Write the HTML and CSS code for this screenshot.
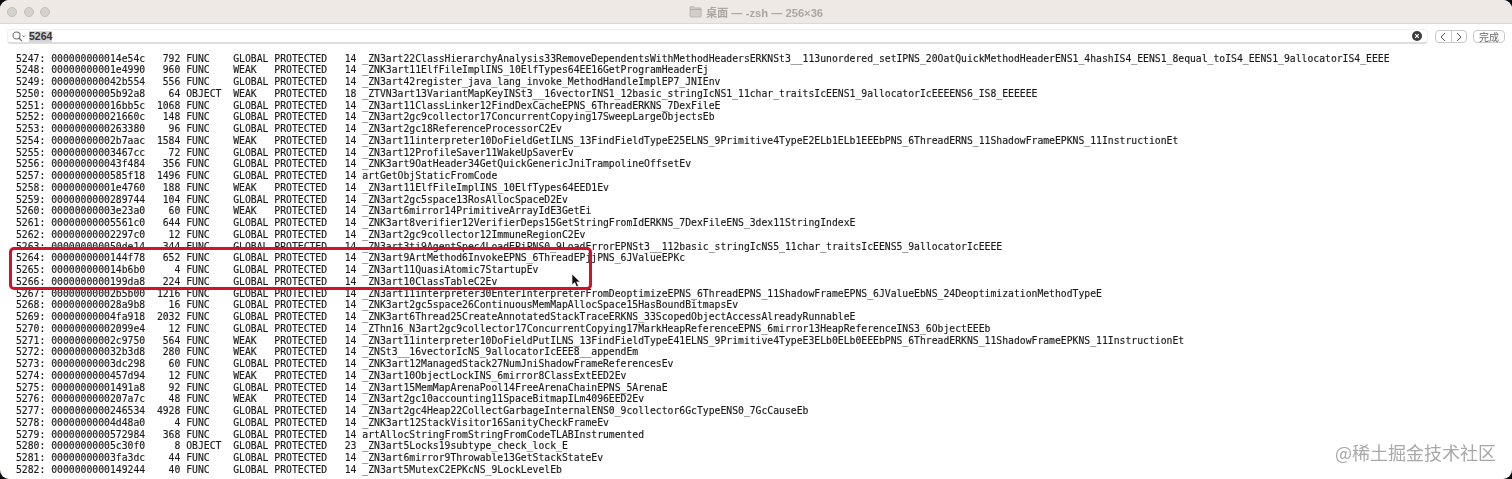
FILE: index.html
```html
<!DOCTYPE html>
<html lang="zh">
<head>
<meta charset="utf-8">
<title>桌面 — -zsh — 256×36</title>
<link rel="stylesheet" href="styles.css">
</head>
<body>
<div class="window">
  <header class="titlebar">
    <div class="lights"><span class="light"></span><span class="light"></span><span class="light"></span></div>
    <div class="title">
      <svg class="folder" width="13" height="12" viewBox="0 0 13 12"><path d="M1 3V1.500C1 1 1.300.7 1.800.7h3l1 1.200h5.400c.6 0 1 .4 1 1V10c0 .7-.4 1-1 1H1.800C1.300 11 1 10.700 1 10z" fill="#d2cdc8" stroke="#b0aba6" stroke-width=".7"/><path d="M1 3.500h11" stroke="#a5a09b" stroke-width=".7"/></svg>
      <span>桌面 — -zsh — 256×36</span>
    </div>
  </header>
  <div class="findbar">
    <div class="field">
      <svg class="glass" width="14" height="11" viewBox="0 0 14 11"><circle cx="4.500" cy="4.500" r="3.500" fill="none" stroke="#6f6f6f" stroke-width="1.100"/><path d="M7 7l2.800 3" stroke="#6f6f6f" stroke-width="1.200"/><path d="M10.500 4.500l1.300 1.300 1.300-1.300" fill="none" stroke="#6f6f6f"/></svg>
      <span class="query">5264</span>
      <svg class="clear" width="10" height="10" viewBox="0 0 10 10"><circle cx="5" cy="5" r="5" fill="#3c3c3c"/><path d="M3.200 3.200l3.600 3.600M6.800 3.200l-3.600 3.600" stroke="#fff" stroke-width="1.200"/></svg>
    </div>
    <div class="stepper">
      <span class="step"><svg width="6" height="10" viewBox="0 0 6 10"><path d="M5 1L1 5l4 4" fill="none" stroke="#555" stroke-width="1"/></svg></span>
      <span class="step"><svg width="6" height="10" viewBox="0 0 6 10"><path d="M1 1l4 4-4 4" fill="none" stroke="#555" stroke-width="1"/></svg></span>
    </div>
    <span class="done">完成</span>
  </div>
  <div class="output">
    <div class="row">5247: 000000000014e54c   792 FUNC    GLOBAL PROTECTED   14 _ZN3art22ClassHierarchyAnalysis33RemoveDependentsWithMethodHeadersERKNSt3__113unordered_setIPNS_20OatQuickMethodHeaderENS1_4hashIS4_EENS1_8equal_toIS4_EENS1_9allocatorIS4_EEEE</div>
    <div class="row">5248: 00000000001e4990   960 FUNC    WEAK   PROTECTED   14 _ZNK3art11ElfFileImplINS_10ElfTypes64EE16GetProgramHeaderEj</div>
    <div class="row">5249: 000000000042b554   556 FUNC    GLOBAL PROTECTED   14 _ZN3art42register_java_lang_invoke_MethodHandleImplEP7_JNIEnv</div>
    <div class="row">5250: 00000000005b92a8    64 OBJECT  WEAK   PROTECTED   18 _ZTVN3art13VariantMapKeyINSt3__16vectorINS1_12basic_stringIcNS1_11char_traitsIcEENS1_9allocatorIcEEEENS6_IS8_EEEEEE</div>
    <div class="row">5251: 000000000016bb5c  1068 FUNC    GLOBAL PROTECTED   14 _ZN3art11ClassLinker12FindDexCacheEPNS_6ThreadERKNS_7DexFileE</div>
    <div class="row">5252: 000000000021660c   148 FUNC    GLOBAL PROTECTED   14 _ZN3art2gc9collector17ConcurrentCopying17SweepLargeObjectsEb</div>
    <div class="row">5253: 0000000000263380    96 FUNC    GLOBAL PROTECTED   14 _ZN3art2gc18ReferenceProcessorC2Ev</div>
    <div class="row">5254: 00000000002b7aac  1584 FUNC    WEAK   PROTECTED   14 _ZN3art11interpreter10DoFieldGetILNS_13FindFieldTypeE25ELNS_9Primitive4TypeE2ELb1ELb1EEEbPNS_6ThreadERNS_11ShadowFrameEPKNS_11InstructionEt</div>
    <div class="row">5255: 00000000003467cc    72 FUNC    GLOBAL PROTECTED   14 _ZN3art12ProfileSaver11WakeUpSaverEv</div>
    <div class="row">5256: 000000000043f484   356 FUNC    GLOBAL PROTECTED   14 _ZNK3art9OatHeader34GetQuickGenericJniTrampolineOffsetEv</div>
    <div class="row">5257: 0000000000585f18  1496 FUNC    GLOBAL PROTECTED   14 artGetObjStaticFromCode</div>
    <div class="row">5258: 00000000001e4760   188 FUNC    WEAK   PROTECTED   14 _ZN3art11ElfFileImplINS_10ElfTypes64EED1Ev</div>
    <div class="row">5259: 0000000000289744   104 FUNC    GLOBAL PROTECTED   14 _ZN3art2gc5space13RosAllocSpaceD2Ev</div>
    <div class="row">5260: 00000000003e23a0    60 FUNC    WEAK   PROTECTED   14 _ZN3art6mirror14PrimitiveArrayIdE3GetEi</div>
    <div class="row">5261: 00000000005561c0   644 FUNC    GLOBAL PROTECTED   14 _ZNK3art8verifier12VerifierDeps15GetStringFromIdERKNS_7DexFileENS_3dex11StringIndexE</div>
    <div class="row">5262: 00000000002297c0    12 FUNC    GLOBAL PROTECTED   14 _ZN3art2gc9collector12ImmuneRegionC2Ev</div>
    <div class="row">5263: 000000000050de14   344 FUNC    GLOBAL PROTECTED   14 _ZN3art3ti9AgentSpec4LoadEPiPNS0_9LoadErrorEPNSt3__112basic_stringIcNS5_11char_traitsIcEENS5_9allocatorIcEEEE</div>
    <div class="row">5264: 0000000000144f78   652 FUNC    GLOBAL PROTECTED   14 _ZN3art9ArtMethod6InvokeEPNS_6ThreadEPjjPNS_6JValueEPKc</div>
    <div class="row">5265: 000000000014b6b0     4 FUNC    GLOBAL PROTECTED   14 _ZN3art11QuasiAtomic7StartupEv</div>
    <div class="row">5266: 0000000000199da8   224 FUNC    GLOBAL PROTECTED   14 _ZN3art10ClassTableC2Ev</div>
    <div class="row">5267: 00000000002b5b00  1216 FUNC    GLOBAL PROTECTED   14 _ZN3art11interpreter30EnterInterpreterFromDeoptimizeEPNS_6ThreadEPNS_11ShadowFrameEPNS_6JValueEbNS_24DeoptimizationMethodTypeE</div>
    <div class="row">5268: 000000000028a9b8    16 FUNC    GLOBAL PROTECTED   14 _ZNK3art2gc5space26ContinuousMemMapAllocSpace15HasBoundBitmapsEv</div>
    <div class="row">5269: 00000000004fa918  2032 FUNC    GLOBAL PROTECTED   14 _ZNK3art6Thread25CreateAnnotatedStackTraceERKNS_33ScopedObjectAccessAlreadyRunnableE</div>
    <div class="row">5270: 00000000002099e4    12 FUNC    GLOBAL PROTECTED   14 _ZThn16_N3art2gc9collector17ConcurrentCopying17MarkHeapReferenceEPNS_6mirror13HeapReferenceINS3_6ObjectEEEb</div>
    <div class="row">5271: 00000000002c9750   564 FUNC    WEAK   PROTECTED   14 _ZN3art11interpreter10DoFieldPutILNS_13FindFieldTypeE41ELNS_9Primitive4TypeE3ELb0ELb0EEEbPNS_6ThreadERKNS_11ShadowFrameEPKNS_11InstructionEt</div>
    <div class="row">5272: 000000000032b3d8   280 FUNC    WEAK   PROTECTED   14 _ZNSt3__16vectorIcNS_9allocatorIcEEE8__appendEm</div>
    <div class="row">5273: 00000000003dc298    60 FUNC    GLOBAL PROTECTED   14 _ZNK3art12ManagedStack27NumJniShadowFrameReferencesEv</div>
    <div class="row">5274: 0000000000457d94    12 FUNC    WEAK   PROTECTED   14 _ZN3art10ObjectLockINS_6mirror8ClassExtEED2Ev</div>
    <div class="row">5275: 00000000001491a8    92 FUNC    GLOBAL PROTECTED   14 _ZN3art15MemMapArenaPool14FreeArenaChainEPNS_5ArenaE</div>
    <div class="row">5276: 0000000000207a7c    48 FUNC    WEAK   PROTECTED   14 _ZN3art2gc10accounting11SpaceBitmapILm4096EED2Ev</div>
    <div class="row">5277: 0000000000246534  4928 FUNC    GLOBAL PROTECTED   14 _ZN3art2gc4Heap22CollectGarbageInternalENS0_9collector6GcTypeENS0_7GcCauseEb</div>
    <div class="row">5278: 00000000004d48a0     4 FUNC    GLOBAL PROTECTED   14 _ZNK3art12StackVisitor16SanityCheckFrameEv</div>
    <div class="row">5279: 0000000000572984   368 FUNC    GLOBAL PROTECTED   14 artAllocStringFromStringFromCodeTLABInstrumented</div>
    <div class="row">5280: 00000000005c30f0     8 OBJECT  GLOBAL PROTECTED   23 _ZN3art5Locks19subtype_check_lock_E</div>
    <div class="row">5281: 00000000003fa3dc    44 FUNC    GLOBAL PROTECTED   14 _ZN3art6mirror9Throwable13GetStackStateEv</div>
    <div class="row">5282: 0000000000149244    40 FUNC    GLOBAL PROTECTED   14 _ZN3art5MutexC2EPKcNS_9LockLevelEb</div>
  </div>
  <div class="redbox"></div>
  <svg class="cursor" width="11" height="15" viewBox="0 0 11 15"><path d="M1 1v11l2.700-2.400 1.800 4.200 2-.9-1.800-4h3.500z" fill="#111" stroke="#fff" stroke-width=".6"/></svg>
  <div class="watermark">@稀土掘金技术社区</div>
</div>
</body>
</html>
```
FILE: styles.css
```css
* { box-sizing: border-box; }
html, body { margin: 0; height: 100%; background: #0b0b12; overflow: hidden; }
.window {
  position: relative;
  width: 1512px;
  height: 479px;
  background: #fff;
  border-radius: 9px;
  overflow: hidden;
  display: flex;
  flex-direction: column;
  filter: blur(0.35px);
}
.titlebar {
  height: 24px;
  flex: none;
  background: #eee9e4;
  border-bottom: 1px solid #dcd8d4;
  display: flex;
  align-items: center;
  position: relative;
  justify-content: center;
}
.lights { position: absolute; left: 7px; top: 7px; display: flex; gap: 6.5px; }
.light { width: 10px; height: 10px; border-radius: 50%; background: #d5d1cd; border: 1px solid #c2beba; }
.title {
  display: flex; align-items: center; gap: 4px;
  font: 700 11.2px "Liberation Sans", "Noto Sans CJK SC", sans-serif;
  color: #aaa6a2;
}
.findbar {
  height: 26px;
  flex: none;
  display: flex;
  align-items: flex-start;
  padding: 5px 7px 0 7px;
  background: #fff;
}
.field {
  flex: 1;
  height: 15px;
  display: flex;
  align-items: center;
  background: #fff;
  border-radius: 4px;
  border: 1px solid #f0f0f0;
  border-bottom: 2px solid #dddddd;
  padding: 0 5px 0 4px;
}
.query {
  margin-left: 3px;
  font: 700 10.5px/11px "Liberation Sans", "Noto Sans CJK SC", sans-serif;
  color: #333;
  background: #d4d4d4;
}
.clear { margin-left: auto; }
.stepper {
  margin: 1px 0 0 7px;
  width: 32px; height: 13px;
  display: flex;
  border: 1px solid #c9c9c9;
  border-radius: 4px;
}
.step { flex: 1; display: flex; align-items: center; justify-content: center; }
.step + .step { border-left: 1px solid #c9c9c9; }
.done {
  margin: 1px 0 0 6px;
  width: 32px; height: 13px;
  border: 1px solid #c9c9c9;
  border-radius: 4px;
  font: 10px/11px "Noto Sans CJK SC", sans-serif;
  color: #666;
  text-align: center;
}
.output {
  padding: 2.5px 0 0 16px;
  font: 9.75px/11.75px "DejaVu Sans Mono", monospace;
  color: #1a1a1a;
  -webkit-text-stroke: 0.15px #1a1a1a;
}
.row { white-space: pre; width: fit-content; }
.redbox {
  position: absolute;
  left: 9px; top: 247px;
  width: 583px; height: 43px;
  border: 3px solid #d3122a;
  border-radius: 5px;
}
.cursor { position: absolute; left: 571px; top: 273px; }
.watermark {
  position: absolute;
  left: 1335px; top: 440px;
  font: 18px/24px "Noto Sans CJK SC", sans-serif;
  color: #a8a8a8;
  white-space: nowrap;
}
```
